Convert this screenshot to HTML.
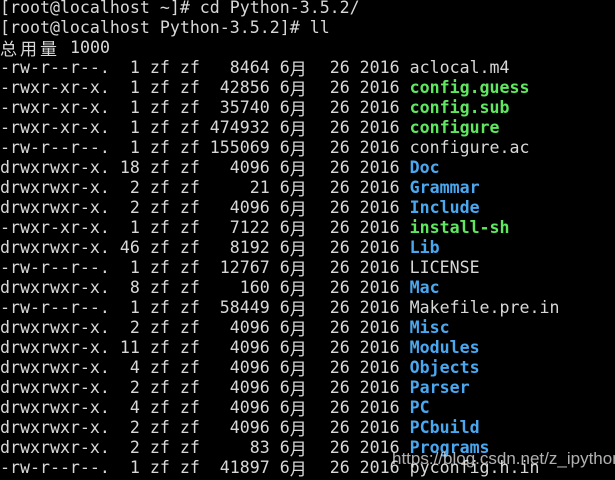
<!DOCTYPE html><html><head><meta charset="utf-8"><style>
html,body{margin:0;padding:0;background:#000;width:615px;height:479px;overflow:hidden}
.t{position:absolute;left:0;top:-2px;font-family:"DejaVu Sans Mono","Liberation Mono","Noto Sans CJK SC",monospace;font-size:16.6px;line-height:20px;color:#d8d8d8}
.t div{height:20px;overflow:visible;white-space:pre}
.m{display:inline-block;width:20px;height:20px;line-height:20px;vertical-align:top;font-family:"Noto Sans CJK SC",sans-serif;font-size:17px}
.g{color:#5fe85f;font-weight:bold}.b{color:#4aa8f0;font-weight:bold}
.c{display:inline-block;width:60px;height:20px;line-height:20px;vertical-align:top;font-family:"Noto Sans CJK SC",sans-serif;font-size:17px;letter-spacing:3px}
.w{position:absolute;left:392px;top:449px;font-family:"Liberation Sans",sans-serif;font-size:17px;color:rgba(235,235,235,0.75)}
</style></head><body><div class="t">
<div>[root@localhost ~]# cd Python-3.5.2/</div>
<div>[root@localhost Python-3.5.2]# ll</div>
<div><span class="c">总用量</span> 1000</div>
<div>-rw-r--r--.  1 zf zf   8464 6<span class="m">月</span>  26 2016 aclocal.m4</div>
<div>-rwxr-xr-x.  1 zf zf  42856 6<span class="m">月</span>  26 2016 <span class="g">config.guess</span></div>
<div>-rwxr-xr-x.  1 zf zf  35740 6<span class="m">月</span>  26 2016 <span class="g">config.sub</span></div>
<div>-rwxr-xr-x.  1 zf zf 474932 6<span class="m">月</span>  26 2016 <span class="g">configure</span></div>
<div>-rw-r--r--.  1 zf zf 155069 6<span class="m">月</span>  26 2016 configure.ac</div>
<div>drwxrwxr-x. 18 zf zf   4096 6<span class="m">月</span>  26 2016 <span class="b">Doc</span></div>
<div>drwxrwxr-x.  2 zf zf     21 6<span class="m">月</span>  26 2016 <span class="b">Grammar</span></div>
<div>drwxrwxr-x.  2 zf zf   4096 6<span class="m">月</span>  26 2016 <span class="b">Include</span></div>
<div>-rwxr-xr-x.  1 zf zf   7122 6<span class="m">月</span>  26 2016 <span class="g">install-sh</span></div>
<div>drwxrwxr-x. 46 zf zf   8192 6<span class="m">月</span>  26 2016 <span class="b">Lib</span></div>
<div>-rw-r--r--.  1 zf zf  12767 6<span class="m">月</span>  26 2016 LICENSE</div>
<div>drwxrwxr-x.  8 zf zf    160 6<span class="m">月</span>  26 2016 <span class="b">Mac</span></div>
<div>-rw-r--r--.  1 zf zf  58449 6<span class="m">月</span>  26 2016 Makefile.pre.in</div>
<div>drwxrwxr-x.  2 zf zf   4096 6<span class="m">月</span>  26 2016 <span class="b">Misc</span></div>
<div>drwxrwxr-x. 11 zf zf   4096 6<span class="m">月</span>  26 2016 <span class="b">Modules</span></div>
<div>drwxrwxr-x.  4 zf zf   4096 6<span class="m">月</span>  26 2016 <span class="b">Objects</span></div>
<div>drwxrwxr-x.  2 zf zf   4096 6<span class="m">月</span>  26 2016 <span class="b">Parser</span></div>
<div>drwxrwxr-x.  4 zf zf   4096 6<span class="m">月</span>  26 2016 <span class="b">PC</span></div>
<div>drwxrwxr-x.  2 zf zf   4096 6<span class="m">月</span>  26 2016 <span class="b">PCbuild</span></div>
<div>drwxrwxr-x.  2 zf zf     83 6<span class="m">月</span>  26 2016 <span class="b">Programs</span></div>
<div>-rw-r--r--.  1 zf zf  41897 6<span class="m">月</span>  26 2016 pyconfig.h.in</div>
</div>
<div class="w">https://blog.csdn.net/z_ipython</div>
</body></html>
